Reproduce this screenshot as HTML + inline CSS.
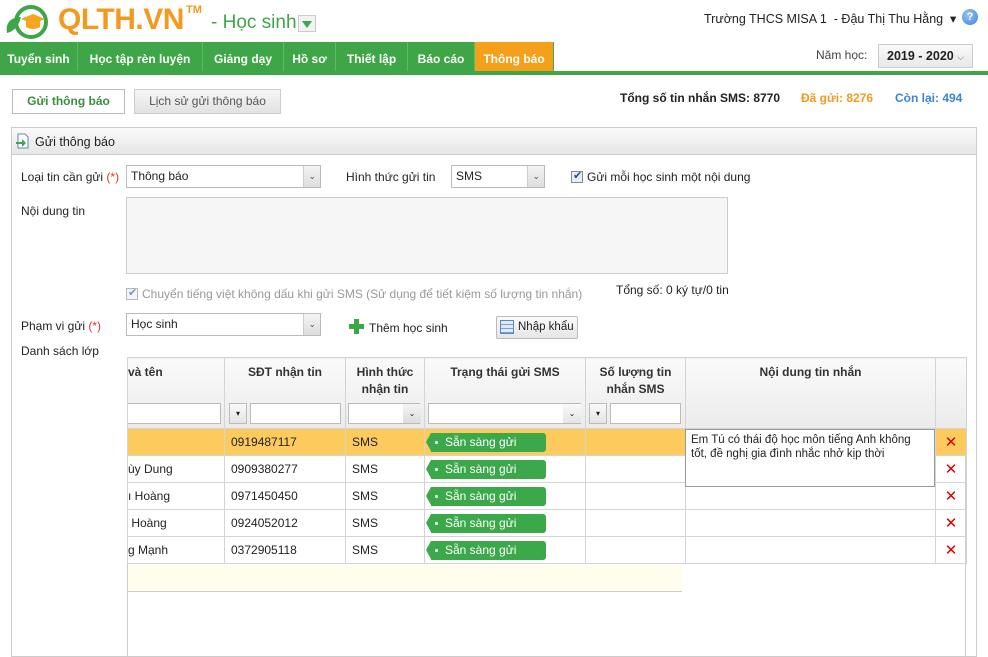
<!DOCTYPE html>
<html><head><meta charset="utf-8">
<style>
*{box-sizing:border-box;margin:0;padding:0}
body{width:988px;height:648px;overflow:hidden;background:#fff;font-family:"Liberation Sans","DejaVu Sans",sans-serif;font-size:12px;color:#222;position:relative}
.a{position:absolute;white-space:nowrap}
.nav{position:absolute;left:0;top:42px;width:988px;height:31px;background:#3ea647;border-bottom:3px solid #3ea647}
.nav div{position:absolute;top:0;height:31px;line-height:34px;color:#fff;font-weight:bold;font-size:12px;text-align:center;border-right:1px solid #5dbb63}
.sel{position:absolute;border:1px solid #bbb;background:#fff;height:23px;line-height:21px;padding-left:4px;font-size:12px}
.sel:after{content:"";position:absolute;right:0;top:0;width:16px;height:21px;background:linear-gradient(#f4f4f4,#ddd);border-left:1px solid #ccc}
.sel i{position:absolute;right:4px;top:0;z-index:2;font-style:normal;font-size:9px;color:#555}
.cb{display:inline-block;width:12px;height:12px;border:1px solid #8a8a8a;background:#e8eef8;vertical-align:-2px;margin-right:4px;position:relative}
.cb:after{content:"✔";position:absolute;left:1px;top:-3px;font-size:11px;color:#2a4a8a}
table{border-collapse:collapse;table-layout:fixed}
td,th{border:1px solid #d4d4d4;height:27px;padding:0 6px;font-weight:normal;font-size:12px}
th{background:linear-gradient(#fafafa,#ebebeb);font-weight:bold;color:#333;vertical-align:top;padding-top:6px;line-height:17px}
.tag{display:inline-block;width:115px;height:19px;background:#3ba84a;color:#fff;line-height:19px;padding-left:14px;position:relative;border-radius:0 3px 3px 0;font-size:12px}
.tag:before{content:"";position:absolute;left:-5px;top:0;border-right:5px solid #3ba84a;border-top:9.5px solid transparent;border-bottom:9.5px solid transparent}
.tag:after{content:"";position:absolute;left:4px;top:8px;width:3px;height:3px;background:#fff;border-radius:50%}
.x{color:#d00;font-weight:bold;font-size:15px;text-align:center;padding:0}
.fi{position:absolute;height:21px;border:1px solid #bbb;background:#fff}
.dd{position:absolute;width:18px;height:21px;border:1px solid #bbb;background:linear-gradient(#fafafa,#e4e4e4);font-size:8px;text-align:center;line-height:19px}
</style></head><body>
<svg class="a" style="left:3px;top:3px" width="54" height="36" viewBox="0 0 54 36">
<circle cx="28" cy="19" r="15" fill="none" stroke="#3ea647" stroke-width="4"/>
<path d="M4 30 C2 20 8 14 18 14 C16 22 12 28 4 30Z" fill="#3ea647"/>
<path d="M18 16 L30 11 L42 16 L30 21Z" fill="#f4a51c"/>
<path d="M23 18 L23 24 Q30 28 37 24 L37 18 L30 21Z" fill="#f4a51c"/>
</svg>
<div class="a" style="left:58px;top:3px;font-size:30px;font-weight:bold;color:#f39a1e;letter-spacing:-0.5px">QLTH.VN</div>
<div class="a" style="left:186px;top:4px;font-size:11px;font-weight:bold;color:#f39a1e">TM</div>
<div class="a" style="left:211px;top:12px;font-size:19px;color:#3ea647">- Học sinh</div>
<div class="a" style="left:298px;top:15px;width:18px;height:17px;border:1px solid #ccc;background:#f2f2f2"><div style="margin:5px auto 0;width:0;height:0;border-left:5px solid transparent;border-right:5px solid transparent;border-top:7px solid #3ea647"></div></div>
<div class="a" style="left:704px;top:11px;font-size:12.5px;color:#222">Trường THCS MISA 1 &nbsp;- Đậu Thị Thu Hằng &nbsp;▾</div>
<div class="a" style="left:962px;top:9px;width:16px;height:16px;border-radius:50%;background:radial-gradient(circle at 40% 35%,#9cc6f5,#3b7fd6);color:#fff;font-size:11px;font-weight:bold;text-align:center;line-height:16px">?</div>
<div class="nav">
<div style="left:0;width:78px">Tuyển sinh</div>
<div style="left:78px;width:125px">Học tập rèn luyện</div>
<div style="left:203px;width:81px">Giảng dạy</div>
<div style="left:284px;width:52px">Hồ sơ</div>
<div style="left:336px;width:72px">Thiết lập</div>
<div style="left:408px;width:67px">Báo cáo</div>
<div style="left:475px;width:78px;background:#f5a01a;border:0">Thông báo</div>
</div>
<div class="a" style="left:554px;top:42px;width:434px;height:30px;background:#fff"></div>
<div class="a" style="left:816px;top:48px;color:#444">Năm học:</div>
<div class="a" style="left:878px;top:44px;width:95px;height:24px;border:1px solid #ccc;background:linear-gradient(#fafafa,#e8e8e8);font-weight:bold;line-height:22px;padding-left:8px;font-size:12.5px">2019 - 2020 <span style="font-weight:normal;font-size:9px;color:#666">⌵</span></div>
<div class="a" style="left:0;top:71px;width:988px;height:4px;background:#3ea647"></div>
<div class="a" style="left:12px;top:89px;width:113px;height:25px;border:1px solid #bbb;background:#fff;color:#3a8f3f;font-weight:bold;text-align:center;line-height:23px">Gửi thông báo</div>
<div class="a" style="left:134px;top:89px;width:147px;height:25px;border:1px solid #ccc;background:linear-gradient(#f6f6f6,#e2e2e2);color:#555;text-align:center;line-height:23px">Lịch sử gửi thông báo</div>
<div class="a" style="left:620px;top:91px;font-weight:bold">Tổng số tin nhắn SMS: 8770</div>
<div class="a" style="left:801px;top:91px;font-weight:bold;color:#f39a1e">Đã gửi: 8276</div>
<div class="a" style="left:895px;top:91px;font-weight:bold;color:#3a86d4">Còn lại: 494</div>
<div class="a" style="left:11px;top:127px;width:966px;height:530px;border:1px solid #ccc"></div>
<div class="a" style="left:12px;top:128px;width:964px;height:27px;background:linear-gradient(#fafafa,#e6e6e6);border-bottom:1px solid #ccc"></div>
<svg class="a" style="left:15px;top:133px" width="16" height="16" viewBox="0 0 16 16"><path d="M3 1h7l3 3v11H3z" fill="#fff" stroke="#5a88c0"/><path d="M1 9h6V6l4 4-4 4v-3H1z" fill="#3ea647"/></svg>
<div class="a" style="left:35px;top:135px;font-size:12.5px">Gửi thông báo</div>
<div class="a" style="left:21px;top:170px">Loại tin cần gửi <span style="color:#d33">(*)</span></div>
<div class="sel" style="left:126px;top:165px;width:195px">Thông báo<i>⌄</i></div>
<div class="a" style="left:346px;top:170px">Hình thức gửi tin</div>
<div class="sel" style="left:451px;top:165px;width:94px">SMS<i>⌄</i></div>
<div class="a" style="left:571px;top:170px"><span class="cb"></span>Gửi mỗi học sinh một nội dung</div>
<div class="a" style="left:21px;top:204px">Nội dung tin</div>
<div class="a" style="left:126px;top:197px;width:602px;height:77px;border:1px solid #ccc;background:#f6f6f6"></div>
<div class="a" style="left:126px;top:287px;color:#999"><span class="cb" style="opacity:.6"></span>Chuyển tiếng việt không dấu khi gửi SMS (Sử dụng để tiết kiệm số lượng tin nhắn)</div>
<div class="a" style="left:616px;top:283px">Tổng số: 0 ký tự/0 tin</div>
<div class="a" style="left:21px;top:319px">Phạm vi gửi <span style="color:#d33">(*)</span></div>
<div class="sel" style="left:126px;top:313px;width:195px">Học sinh<i>⌄</i></div>
<div class="a" style="left:349px;top:319px;width:15px;height:15px">
<div style="position:absolute;left:5px;top:0;width:5px;height:15px;background:#3ea647"></div>
<div style="position:absolute;left:0;top:5px;width:15px;height:5px;background:#3ea647"></div></div>
<div class="a" style="left:369px;top:321px">Thêm học sinh</div>
<div class="a" style="left:496px;top:316px;width:82px;height:23px;border:1px solid #bbb;border-radius:2px;background:linear-gradient(#fafafa,#e6e6e6);line-height:21px;padding-left:21px;font-size:11.5px">Nhập khẩu</div>
<div class="a" style="left:500px;top:320px;width:14px;height:14px;border:1px solid #5a88c0;background:repeating-linear-gradient(#dfe9f5 0 3px,#7aa2d0 3px 4px)"></div>
<div class="a" style="left:21px;top:344px">Danh sách lớp</div>
<div class="a" style="left:127px;top:357px;width:839px;height:300px;border-left:1px solid #ccc;border-right:1px solid #ccc"></div>
<table class="a" style="left:127px;top:357px;width:839px">
<colgroup><col style="width:97px"><col style="width:121px"><col style="width:79px"><col style="width:161px"><col style="width:100px"><col style="width:250px"><col style="width:31px"></colgroup>
<tr style="height:71px"><th style="text-align:left;padding-left:0">và tên</th><th>SĐT nhận tin</th><th>Hình thức<br>nhận tin</th><th>Trạng thái gửi SMS</th><th>Số lượng tin<br>nhắn SMS</th><th>Nội dung tin nhắn</th><th></th></tr>
<tr style="background:#fdca5e"><td></td><td>0919487117</td><td>SMS</td><td><span class="tag">Sẵn sàng gửi</span></td><td></td><td style="border-bottom:0"></td><td class="x">✕</td></tr>
<tr><td style="padding-left:0">ùy Dung</td><td>0909380277</td><td>SMS</td><td><span class="tag">Sẵn sàng gửi</span></td><td></td><td></td><td class="x">✕</td></tr>
<tr><td style="padding-left:0">ı Hoàng</td><td>0971450450</td><td>SMS</td><td><span class="tag">Sẵn sàng gửi</span></td><td></td><td></td><td class="x">✕</td></tr>
<tr><td style="padding-left:0">&nbsp;Hoàng</td><td>0924052012</td><td>SMS</td><td><span class="tag">Sẵn sàng gửi</span></td><td></td><td></td><td class="x">✕</td></tr>
<tr><td style="padding-left:0">g Mạnh</td><td>0372905118</td><td>SMS</td><td><span class="tag">Sẵn sàng gửi</span></td><td></td><td></td><td class="x">✕</td></tr>
</table>
<div class="a" style="left:128px;top:565px;width:554px;height:27px;background:#fffeee;border-bottom:1px solid #ccc"></div>
<div class="fi" style="left:128px;top:403px;width:93px;border-left:0"></div>
<div class="dd" style="left:229px;top:403px">▾</div>
<div class="fi" style="left:250px;top:403px;width:91px"></div>
<div class="fi" style="left:348px;top:403px;width:72px"></div><div class="dd" style="left:403px;top:404px;border:0;background:linear-gradient(#f4f4f4,#ddd);height:19px">⌄</div>
<div class="fi" style="left:428px;top:403px;width:153px"></div><div class="dd" style="left:563px;top:404px;border:0;height:19px">⌄</div>
<div class="dd" style="left:589px;top:403px">▾</div>
<div class="fi" style="left:610px;top:403px;width:71px"></div>
<div class="a" style="left:685px;top:429px;width:250px;height:58px;border:1px solid #999;background:#fff;padding:3px 5px;white-space:normal;font-size:11.5px;line-height:14px">Em Tú có thái độ học môn tiếng Anh không tốt, đề nghị gia đình nhắc nhở kịp thời</div>
</body></html>
